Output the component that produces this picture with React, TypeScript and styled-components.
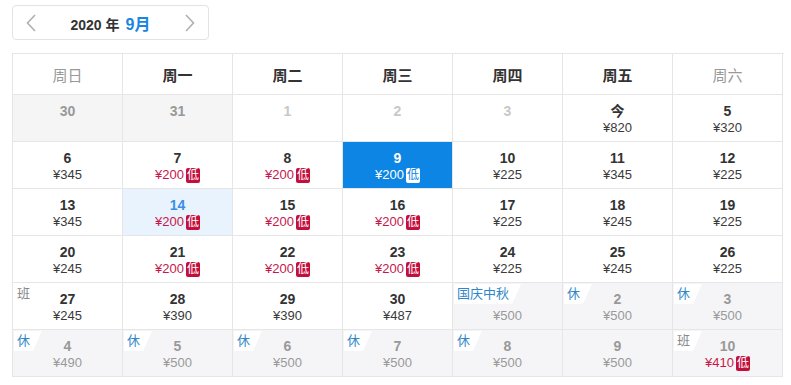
import styled, { createGlobalStyle, css } from 'styled-components';

const GlobalStyle = createGlobalStyle`
  body {
    margin: 0;
    background: #fff;
    font-family: "Liberation Sans", Arial, "Noto Sans CJK SC", sans-serif;
    color: #333;
  }
`;

const Page = styled.div`
  padding: 5px 0 0 12px;
`;

const MonthBar = styled.div`
  width: 197px;
  height: 35px;
  border: 1px solid #e3e3e3;
  border-radius: 4px;
  display: flex;
  align-items: center;
  justify-content: space-between;
  padding: 0 10px;
  box-sizing: border-box;
`;

const Arrow = styled.button`
  border: none;
  background: none;
  padding: 0;
  width: 16px;
  height: 20px;
  display: flex;
  align-items: center;
  justify-content: center;
  cursor: pointer;
`;

const MonthTitle = styled.div`
  font-size: 14px;
  font-weight: bold;
  color: #333;
  display: flex;
  align-items: baseline;
  gap: 6px;
`;

const MonthNum = styled.span`
  font-size: 16px;
  color: #1a86e0;
`;

const Grid = styled.div`
  margin-top: 13px;
  width: 771px;
  display: grid;
  grid-template-columns: repeat(7, 110px);
  border-top: 1px solid #e6e6e6;
  border-left: 1px solid #e6e6e6;
`;

const HeadCell = styled.div<{ $weekend?: boolean }>`
  height: 40px;
  border-right: 1px solid #e6e6e6;
  border-bottom: 1px solid #e6e6e6;
  display: flex;
  align-items: center;
  justify-content: center;
  font-size: 15px;
  font-weight: ${p => (p.$weekend ? 'normal' : 'bold')};
  color: ${p => (p.$weekend ? '#999' : '#333')};
`;

type Kind = 'normal' | 'prev' | 'past' | 'next' | 'selected' | 'hover';

const Cell = styled.div<{ $kind: Kind }>`
  position: relative;
  height: 47px;
  border-right: 1px solid #e6e6e6;
  border-bottom: 1px solid #e6e6e6;
  display: flex;
  flex-direction: column;
  align-items: center;
  padding-top: 8px;
  box-sizing: border-box;
  background: #fff;
  ${p => p.$kind === 'prev' && css`background: #f5f5f5;`}
  ${p => p.$kind === 'next' && css`background: #f5f5f7;`}
  ${p => p.$kind === 'selected' && css`background: #0c85e4;`}
  ${p => p.$kind === 'hover' && css`background: #e9f3fd;`}
`;

const DayNum = styled.div<{ $kind: Kind }>`
  font-size: 14px;
  font-weight: bold;
  line-height: 17px;
  height: 17px;
  color: #333;
  ${p => p.$kind === 'prev' && css`color: #999;`}
  ${p => p.$kind === 'past' && css`color: #c8c8c8;`}
  ${p => p.$kind === 'next' && css`color: #999;`}
  ${p => p.$kind === 'selected' && css`color: #fff;`}
  ${p => p.$kind === 'hover' && css`color: #3a8ee6;`}
`;

const Price = styled.div<{ $kind: Kind; $low?: boolean }>`
  font-size: 13px;
  line-height: 16px;
  display: flex;
  align-items: center;
  gap: 2px;
  color: ${p =>
    p.$kind === 'selected' ? '#fff' : p.$low ? '#c8174a' : p.$kind === 'next' ? '#999' : '#3a3a3a'};
`;

const LowBadge = styled.span<{ $inverse?: boolean }>`
  display: inline-block;
  font-size: 12px;
  line-height: 15px;
  padding: 0 1px;
  border-radius: 2px;
  background: ${p => (p.$inverse ? '#fff' : '#c20f3e')};
  color: ${p => (p.$inverse ? '#0c85e4' : '#fff')};
`;

const Tag = styled.span<{ $work?: boolean }>`
  position: absolute;
  top: 1px;
  left: 1px;
  font-size: 13px;
  line-height: 20px;
  padding: 0 12px 0 3px;
  background: #fff;
  color: ${p => (p.$work ? '#888' : '#2f86c8')};
  clip-path: polygon(0 0, 100% 0, calc(100% - 9px) 100%, 0 100%);
`;

type Day = {
  n: string;
  price?: number;
  low?: boolean;
  kind?: Kind;
  tag?: string;
};

const weeks: Day[][] = [
  [
    { n: '30', kind: 'prev' },
    { n: '31', kind: 'prev' },
    { n: '1', kind: 'past' },
    { n: '2', kind: 'past' },
    { n: '3', kind: 'past' },
    { n: '今', price: 820 },
    { n: '5', price: 320 },
  ],
  [
    { n: '6', price: 345 },
    { n: '7', price: 200, low: true },
    { n: '8', price: 200, low: true },
    { n: '9', price: 200, low: true, kind: 'selected' },
    { n: '10', price: 225 },
    { n: '11', price: 345 },
    { n: '12', price: 225 },
  ],
  [
    { n: '13', price: 345 },
    { n: '14', price: 200, low: true, kind: 'hover' },
    { n: '15', price: 200, low: true },
    { n: '16', price: 200, low: true },
    { n: '17', price: 225 },
    { n: '18', price: 245 },
    { n: '19', price: 225 },
  ],
  [
    { n: '20', price: 245 },
    { n: '21', price: 200, low: true },
    { n: '22', price: 200, low: true },
    { n: '23', price: 200, low: true },
    { n: '24', price: 225 },
    { n: '25', price: 245 },
    { n: '26', price: 225 },
  ],
  [
    { n: '27', price: 245, tag: '班' },
    { n: '28', price: 390 },
    { n: '29', price: 390 },
    { n: '30', price: 487 },
    { n: '', price: 500, kind: 'next', tag: '国庆中秋' },
    { n: '2', price: 500, kind: 'next', tag: '休' },
    { n: '3', price: 500, kind: 'next', tag: '休' },
  ],
  [
    { n: '4', price: 490, kind: 'next', tag: '休' },
    { n: '5', price: 500, kind: 'next', tag: '休' },
    { n: '6', price: 500, kind: 'next', tag: '休' },
    { n: '7', price: 500, kind: 'next', tag: '休' },
    { n: '8', price: 500, kind: 'next', tag: '休' },
    { n: '9', price: 500, kind: 'next' },
    { n: '10', price: 410, low: true, kind: 'next', tag: '班' },
  ],
];

const heads = ['周日', '周一', '周二', '周三', '周四', '周五', '周六'];

const Chevron = ({ left }: { left?: boolean }) => (
  <svg width="10" height="18" viewBox="0 0 10 18">
    <path
      d={left ? 'M9 1 L1.5 9 L9 17' : 'M1 1 L8.5 9 L1 17'}
      fill="none"
      stroke="#b0b0b0"
      strokeWidth="1.6"
    />
  </svg>
);

const App = () => {
  return (
    <>
      <GlobalStyle />
      <Page>
        <MonthBar>
          <Arrow>
            <Chevron left />
          </Arrow>
          <MonthTitle>
            2020 年 <MonthNum>9月</MonthNum>
          </MonthTitle>
          <Arrow>
            <Chevron />
          </Arrow>
        </MonthBar>

        <Grid>
          {heads.map((h, i) => (
            <HeadCell key={h} $weekend={i === 0 || i === 6}>
              {h}
            </HeadCell>
          ))}
          {weeks.flat().map((d, i) => {
            const kind = d.kind || 'normal';
            return (
              <Cell key={i} $kind={kind}>
                {d.tag && <Tag $work={d.tag === '班'}>{d.tag}</Tag>}
                <DayNum $kind={kind}>{d.n}</DayNum>
                {d.price !== undefined && (
                  <Price $kind={kind} $low={d.low}>
                    ¥{d.price}
                    {d.low && <LowBadge $inverse={kind === 'selected'}>低</LowBadge>}
                  </Price>
                )}
              </Cell>
            );
          })}
        </Grid>
      </Page>
    </>
  );
};

export default App;
